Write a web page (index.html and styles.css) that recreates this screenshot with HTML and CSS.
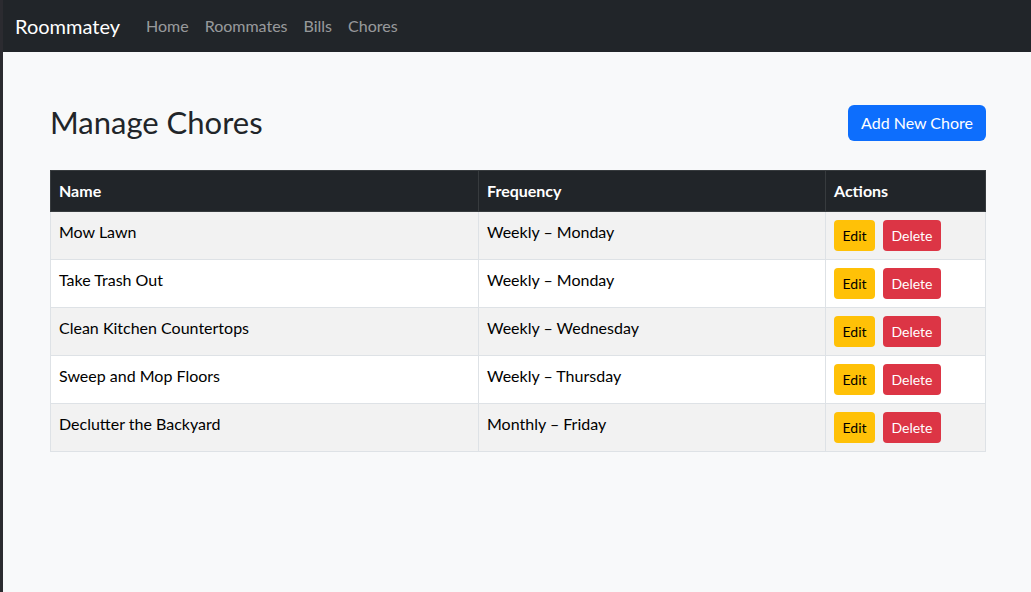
FILE: index.html
```html
<!DOCTYPE html>
<html lang="en">
<head>
<meta charset="utf-8">
<title>Roommatey - Manage Chores</title>
<link rel="stylesheet" href="styles.css">
</head>
<body>
<nav class="navbar">
  <a class="brand" href="#">Roommatey</a>
  <ul class="nav-links">
    <li><a href="#">Home</a></li>
    <li><a href="#">Roommates</a></li>
    <li><a href="#">Bills</a></li>
    <li><a href="#">Chores</a></li>
  </ul>
</nav>
<main class="container">
  <div class="page-head">
    <h2>Manage Chores</h2>
    <a class="btn btn-primary" href="#">Add New Chore</a>
  </div>
  <table class="chores">
    <thead>
      <tr><th class="c-name">Name</th><th class="c-freq">Frequency</th><th class="c-act">Actions</th></tr>
    </thead>
    <tbody>
      <tr><td>Mow Lawn</td><td>Weekly – Monday</td><td><div class="actions"><a class="btn-sm btn-warning" href="#">Edit</a><a class="btn-sm btn-danger" href="#">Delete</a></div></td></tr>
      <tr><td>Take Trash Out</td><td>Weekly – Monday</td><td><div class="actions"><a class="btn-sm btn-warning" href="#">Edit</a><a class="btn-sm btn-danger" href="#">Delete</a></div></td></tr>
      <tr><td>Clean Kitchen Countertops</td><td>Weekly – Wednesday</td><td><div class="actions"><a class="btn-sm btn-warning" href="#">Edit</a><a class="btn-sm btn-danger" href="#">Delete</a></div></td></tr>
      <tr><td>Sweep and Mop Floors</td><td>Weekly – Thursday</td><td><div class="actions"><a class="btn-sm btn-warning" href="#">Edit</a><a class="btn-sm btn-danger" href="#">Delete</a></div></td></tr>
      <tr><td>Declutter the Backyard</td><td>Monthly – Friday</td><td><div class="actions"><a class="btn-sm btn-warning" href="#">Edit</a><a class="btn-sm btn-danger" href="#">Delete</a></div></td></tr>
    </tbody>
  </table>
</main>
</body>
</html>
```

FILE: styles.css
```css
* { box-sizing: border-box; }
html, body { height: 100%; }
body {
  margin: 0;
  background: #f8f9fa;
  border-left: 3px solid #2b2b30;
  font-family: Lato, "Noto Sans", sans-serif;
  font-size: 16px;
  line-height: 1.5;
  color: #212529;
}
a { text-decoration: none; }
.navbar {
  height: 52px;
  background: #212529;
  display: flex;
  align-items: center;
  padding: 0 12px;
}
.brand {
  color: #fff;
  font-size: 20px;
  margin-right: 18px;
}
.nav-links {
  list-style: none;
  margin: 0;
  padding: 0;
  display: flex;
}
.nav-links a {
  display: block;
  padding: 8px;
  color: rgba(255,255,255,.55);
}
.container {
  padding: 52px 45px 0 47px;
}
.page-head {
  display: flex;
  justify-content: space-between;
  align-items: center;
  height: 38px;
  margin-bottom: 28px;
}
.page-head h2 {
  margin: 0;
  font-size: 31px;
  font-weight: 400;
  line-height: 1.2;
}
.btn {
  display: inline-block;
  padding: 6px 13px;
  border-radius: 6px;
  font-size: 16px;
  line-height: 1.5;
}
.btn-primary { background: #0d6efd; color: #fff; }
.chores {
  width: 100%;
  border-collapse: collapse;
  border: 1px solid #dee2e6;
}
.chores th, .chores td {
  padding: 8px;
  text-align: left;
  vertical-align: top;
  border: 1px solid #dee2e6;
}
.chores th {
  background: #212529;
  color: #fff;
  font-weight: 700;
  border-color: #373b3e;
}
.c-name { width: 428px; }
.c-freq { width: 347px; }
.chores tbody tr:nth-child(odd) td { background: #f2f2f2; }
.chores tbody tr:nth-child(even) td { background: #fff; }
.chores td { color: #000; }
.actions { display: flex; gap: 8px; }
.btn-sm {
  display: inline-block;
  padding: 4px 8.5px 3px;
  font-size: 14px;
  line-height: 24px;
  border-radius: 4px;
}
.btn-warning { background: #ffc107; color: #000; }
.btn-danger { background: #dc3545; color: #fff; }
```
